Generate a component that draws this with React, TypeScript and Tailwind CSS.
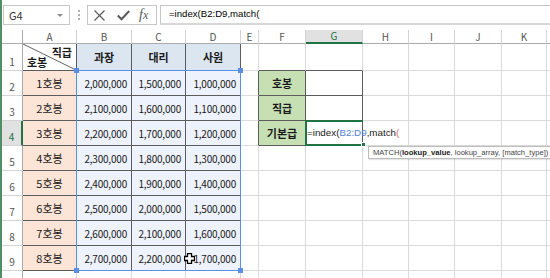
import React from 'react';

const COLS = ['A', 'B', 'C', 'D', 'E', 'F', 'G', 'H', 'I', 'J', 'K', 'L'];
const RANKS = ['과장', '대리', '사원'];
const BASE = [2000000, 1500000, 1000000];

const fmt = (n: number) => n.toLocaleString('en-US');

function isDarkRight(r: number, c: number) {
  if (c <= 3 && r <= 9) return true;
  if (c >= 4 && c <= 6 && r >= 2 && r <= 4) return true;
  return false;
}

function isDarkBottom(r: number, c: number) {
  if (c <= 3 && r <= 9) return true;
  if (c >= 5 && c <= 6 && r >= 1 && r <= 4) return true;
  return false;
}

function cellBg(r: number, c: number) {
  if (r === 1 && c >= 1 && c <= 3) return 'bg-[#dce6f1]';
  if (r >= 2 && r <= 9 && c === 0) return 'bg-[#fce4d6]';
  if (r >= 2 && r <= 9 && c >= 1 && c <= 3) return 'bg-[#edf2fc]';
  if (r >= 2 && r <= 4 && c === 5) return 'bg-[#c6e0b4]';
  return 'bg-white';
}

function CellContent({ r, c }: { r: number; c: number }) {
  if (r === 1 && c === 0) {
    return (
      <>
        <svg className="absolute inset-0 w-full h-full" viewBox="0 0 53 26" preserveAspectRatio="none">
          <line x1="0" y1="0" x2="53" y2="26" stroke="#3a3a3a" strokeWidth="0.8" />
        </svg>
        <span className="absolute right-[4px] top-[3px] font-bold text-[11px] leading-none">직급</span>
        <span className="absolute left-[4px] bottom-[2px] font-bold text-[11px] leading-none">호봉</span>
      </>
    );
  }
  if (r === 1 && c >= 1 && c <= 3) {
    return <span className="w-full text-center font-bold text-[11px]">{RANKS[c - 1]}</span>;
  }
  if (r >= 2 && r <= 9 && c === 0) {
    return <span className="w-full text-center text-[11px]">{r - 1}호봉</span>;
  }
  if (r >= 2 && r <= 9 && c >= 1 && c <= 3) {
    return (
      <span className="w-full text-right pr-[4px] text-[10px] tracking-[-0.2px]">
        {fmt(BASE[c - 1] + (r - 2) * 100000)}
      </span>
    );
  }
  if (c === 5 && r >= 2 && r <= 4) {
    return <span className="w-full text-center font-bold text-[11px]">{['호봉', '직급', '기본급'][r - 2]}</span>;
  }
  if (c === 6 && r === 4) {
    return (
      <span className="pl-[1px] whitespace-nowrap font-['Liberation_Sans',sans-serif] text-[9.8px] relative z-10">
        =index(<span className="text-[#4f7fd8]">B2:D9</span>,match<span className="text-[#e0686a]">(</span>
      </span>
    );
  }
  return null;
}

function FormulaBar() {
  return (
    <div className="h-[30px] shrink-0 flex items-center bg-white text-[#333]">
      <div className="ml-[1px] w-[67px] h-[20px] border border-[#c6c6c6] flex items-center justify-between px-[5px]">
        <span className="text-[11px]">G4</span>
        <span className="w-0 h-0 border-l-[3px] border-r-[3px] border-t-[3px] border-l-transparent border-r-transparent border-t-[#8a8a8a] mr-[1px]" />
      </div>
      <div className="ml-[8px] w-[2px] flex flex-col gap-[2px] items-center">
        <span className="w-[2px] h-[2px] bg-[#b0b0b0]" />
        <span className="w-[2px] h-[2px] bg-[#b0b0b0]" />
        <span className="w-[2px] h-[2px] bg-[#b0b0b0]" />
      </div>
      <div className="ml-[7px] w-[70px] h-[20px] border border-[#c6c6c6] flex items-center">
        <svg className="ml-[6px] w-[11px] h-[11px]" viewBox="0 0 11 11">
          <path d="M0.5 0.5 L10.5 10.5 M10.5 0.5 L0.5 10.5" stroke="#5a5a5a" strokeWidth="1.2" />
        </svg>
        <svg className="ml-[12px] w-[13px] h-[11px]" viewBox="0 0 13 11">
          <path d="M0.8 5.5 L4.5 9.2 L12.2 1" stroke="#5a5a5a" strokeWidth="2" fill="none" />
        </svg>
        <span className="ml-[9px] font-['Liberation_Serif',serif] italic text-[14px] text-[#5a5a5a] leading-none">
          f<span className="text-[12px]">x</span>
        </span>
      </div>
      <div className="ml-[3px] flex-1 h-[20px] border border-[#c6c6c6] border-b-2 border-b-[#d8d8d8] flex items-center pl-[8px]">
        <span className="font-['Liberation_Sans',sans-serif] text-[9.6px] text-black whitespace-nowrap">=index(B2:D9,match(</span>
      </div>
    </div>
  );
}

export default function App() {
  const rows = Array.from({ length: 10 }, (_, i) => i + 1);

  return (
    <div className="w-[550px] h-[278px] overflow-hidden flex bg-white font-['Noto_Sans_CJK_KR','Noto_Sans',sans-serif] text-[#1a1a1a]">
      <div className="w-[2px] shrink-0 bg-[#4e8f67]" />
      <div className="flex-1 flex flex-col">
        <FormulaBar />
        <div className="relative shrink-0 grid grid-cols-[21px_54px_55px_54px_55px_18px_47px_57px_46px_46px_47px_45px_60px] grid-rows-[14px_27px_repeat(8,25px)_25px]">
          {/* column headers */}
          <div className="border-r border-b border-r-[#ababab] border-b-[#ababab] bg-white" />
          {COLS.map((l) =>
            l === 'G' ? (
              <div
                key={l}
                className="border-r border-b-2 border-r-[#d4d4d4] border-b-[#217346] bg-[#e1e1e1] text-[#217346] text-[10px] leading-none flex items-center justify-center"
              >
                {l}
              </div>
            ) : (
              <div
                key={l}
                className="border-r border-b border-r-[#d4d4d4] border-b-[#ababab] text-[#555] text-[10px] leading-none flex items-center justify-center"
              >
                {l}
              </div>
            )
          )}

          {rows.map((r) => (
            <React.Fragment key={r}>
              {r === 4 ? (
                <div className="border-r-2 border-b border-r-[#217346] border-b-[#d4d4d4] bg-[#e1e1e1] text-[#217346] text-[10px] leading-none flex items-end justify-center pb-[3px]">
                  {r}
                </div>
              ) : (
                <div className="border-r border-b border-r-[#ababab] border-b-[#d4d4d4] text-[#555] text-[10px] leading-none flex items-end justify-center pb-[3px]">
                  {r}
                </div>
              )}
              {COLS.map((_, c) => (
                <div
                  key={c}
                  className={[
                    'relative border-r border-b flex items-center',
                    isDarkRight(r, c) ? 'border-r-[#5c5c5c]' : 'border-r-[#dadada]',
                    isDarkBottom(r, c) ? 'border-b-[#5c5c5c]' : 'border-b-[#dadada]',
                    cellBg(r, c),
                  ].join(' ')}
                >
                  <CellContent r={r} c={c} />
                </div>
              ))}
            </React.Fragment>
          ))}

          {/* reference range B2:D9 */}
          <div className="absolute col-start-3 col-end-6 row-start-3 row-end-11 -left-px -top-px right-0 bottom-0 border border-[#5b8ee6] pointer-events-none">
            <span className="absolute -left-[3px] -top-[3px] w-[5px] h-[5px] bg-[#5b8ee6]" />
            <span className="absolute -right-[3px] -top-[3px] w-[5px] h-[5px] bg-[#5b8ee6]" />
            <span className="absolute -left-[3px] -bottom-[3px] w-[5px] h-[5px] bg-[#5b8ee6]" />
            <span className="absolute -right-[3px] -bottom-[3px] w-[5px] h-[5px] bg-[#5b8ee6]" />
          </div>

          {/* mouse cursor over D9 */}
          <svg className="absolute col-start-5 col-end-6 row-start-10 row-end-11 left-[-2px] top-[7px] w-[11px] h-[11px] pointer-events-none" viewBox="0 0 11 11">
            <polygon
              points="3.5,0.5 7.5,0.5 7.5,3.5 10.5,3.5 10.5,7.5 7.5,7.5 7.5,10.5 3.5,10.5 3.5,7.5 0.5,7.5 0.5,3.5 3.5,3.5"
              fill="#fff"
              stroke="#000"
              strokeWidth="1.3"
            />
          </svg>

          {/* active cell G4 (right edge hidden by overflowing text) */}
          <div className="absolute col-start-8 col-end-9 row-start-5 row-end-6 -left-px -top-px right-0 bottom-0 border-2 border-r-0 border-[#217346] pointer-events-none">
            <span className="absolute -right-[3px] -bottom-[3px] w-[5px] h-[5px] bg-[#217346] border border-white" />
            <div className="absolute left-[61px] top-[24px] h-[13px] w-[200px] bg-white border border-[#bdbdbd] shadow-[1px_1px_1px_rgba(0,0,0,0.1)] flex items-center pl-[4px] font-['Liberation_Sans',sans-serif] text-[7.6px] text-[#444] whitespace-nowrap">
              MATCH(<span className="font-bold text-[#222]">lookup_value</span>, lookup_array, [match_type])
            </div>
          </div>
        </div>
      </div>
    </div>
  );
}
